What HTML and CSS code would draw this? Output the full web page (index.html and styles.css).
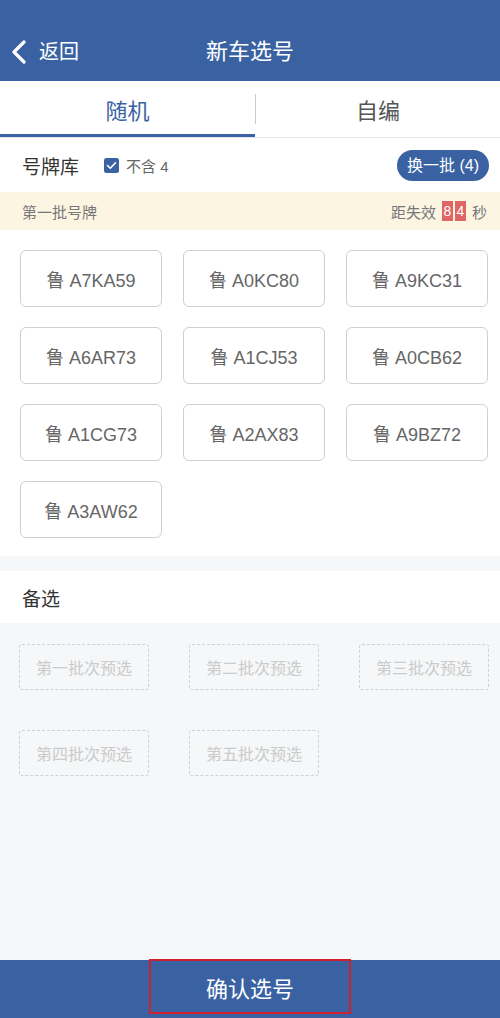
FILE: index.html
```html
<!DOCTYPE html>
<html lang="zh">
<head>
<meta charset="utf-8">
<link rel="stylesheet" href="styles.css">
</head>
<body>
<div class="page">
  <header class="topbar">
    <div class="back">
      <svg class="chev" width="16" height="24" viewBox="0 0 16 24"><path d="M13 2 L3 12 L13 22" fill="none" stroke="#fff" stroke-width="3.2" stroke-linecap="round" stroke-linejoin="round"/></svg>
      <span class="back-text">返回</span>
    </div>
    <div class="title">新车选号</div>
  </header>
  <nav class="tabs">
    <div class="tab first active">随机</div>
    <div class="tab-sep"></div>
    <div class="tab">自编</div>
  </nav>
  <section class="pool">
    <div class="pool-head">
      <span class="pool-title">号牌库</span>
      <span class="check">
        <svg width="15" height="15" viewBox="0 0 15 15"><rect x="0" y="0" width="15" height="15" rx="2.5" fill="#3a62a3"/><path d="M3.5 7.5 L6.3 10.3 L11.5 4.8" fill="none" stroke="#fff" stroke-width="1.6" stroke-linecap="round" stroke-linejoin="round"/></svg>
        <span class="check-text">不含 4</span>
      </span>
      <span class="swap">换一批 (4)</span>
    </div>
    <div class="batch">
      <span class="batch-name">第一批号牌</span>
      <span class="timer">距失效 <span class="digits"><span class="digit">8</span><span class="digit">4</span></span> 秒</span>
    </div>
    <div class="plates">
      <div class="plate">鲁 A7KA59</div>
      <div class="plate">鲁 A0KC80</div>
      <div class="plate">鲁 A9KC31</div>
      <div class="plate">鲁 A6AR73</div>
      <div class="plate">鲁 A1CJ53</div>
      <div class="plate">鲁 A0CB62</div>
      <div class="plate">鲁 A1CG73</div>
      <div class="plate">鲁 A2AX83</div>
      <div class="plate">鲁 A9BZ72</div>
      <div class="plate">鲁 A3AW62</div>
    </div>
  </section>
  <section class="alt-head">备选</section>
  <section class="alts">
    <div class="alt">第一批次预选</div>
    <div class="alt">第二批次预选</div>
    <div class="alt">第三批次预选</div>
    <div class="alt">第四批次预选</div>
    <div class="alt">第五批次预选</div>
  </section>
  <div class="spacer"></div>
  <footer class="bottombar">
    <div class="confirm">确认选号</div>
  </footer>
</div>
</body>
</html>
```
FILE: styles.css
```css
* { box-sizing: border-box; }
html, body { margin: 0; padding: 0; }
body {
  font-family: "Liberation Sans", "Noto Sans CJK SC", sans-serif;
  background: #f5f7f8;
  width: 500px;
  height: 1018px;
  overflow: hidden;
}
.page {
  display: flex;
  flex-direction: column;
  height: 1018px;
}
.topbar {
  height: 81px;
  background: #3a62a3;
  display: flex;
  align-items: center;
  padding-top: 22px;
  position: relative;
  color: #fff;
  flex-shrink: 0;
}
.back {
  display: flex;
  align-items: center;
  padding-left: 11px;
  gap: 12px;
}
.back-text { font-size: 20px; line-height: 24px; }
.title {
  position: absolute;
  left: 0; right: 0;
  bottom: 14px;
  text-align: center;
  font-size: 22px;
  line-height: 30px;
  pointer-events: none;
}
.tabs {
  height: 57px;
  background: #fff;
  display: flex;
  align-items: center;
  border-bottom: 1px solid #e6e6e6;
  flex-shrink: 0;
}
.tab {
  flex: 1;
  height: 100%;
  display: flex;
  align-items: center;
  justify-content: center;
  font-size: 22px;
  color: #555;
  border-bottom: 3px solid transparent;
  padding-top: 3px;
}
.tab.first { flex: 0 0 255px; }
.tab.active { color: #3a62a3; border-bottom-color: #3a62a3; }
.tab-sep { width: 1px; height: 30px; background: #ccc; }
.pool { background: #fff; padding-bottom: 18px; flex-shrink: 0; }
.pool-head {
  height: 54px;
  display: flex;
  align-items: center;
  padding: 0 11px 0 22px;
}
.pool-title { font-size: 19px; color: #333; }
.check {
  display: flex;
  align-items: center;
  gap: 7px;
  margin-left: 25px;
}
.check svg { display: block; }
.check-text { font-size: 15px; color: #666; }
.swap {
  margin-left: auto;
  background: #3a62a3;
  color: #fff;
  font-size: 16px;
  height: 31px;
  line-height: 31px;
  padding: 0 10px;
  border-radius: 16px;
}
.batch {
  height: 38px;
  background: #fcf5e2;
  display: flex;
  align-items: center;
  justify-content: space-between;
  padding: 0 13px 0 22px;
  font-size: 15px;
  color: #777;
}
.timer { display: flex; align-items: center; gap: 4px; }
.digits { display: flex; gap: 2px; margin: 0 2px; }
.digit {
  background: #e06565;
  color: #fff;
  width: 11px;
  height: 20px;
  line-height: 20px;
  text-align: center;
  font-size: 14px;
}
.plates {
  display: grid;
  grid-template-columns: repeat(3, 142px);
  justify-content: space-between;
  row-gap: 20px;
  padding: 20px 12px 0 20px;
}
.plate {
  height: 57px;
  border: 1.5px solid #cfcfcf;
  border-radius: 6px;
  display: flex;
  align-items: center;
  justify-content: center;
  font-size: 18px;
  color: #666;
}
.alt-head {
  margin-top: 15px;
  background: #fff;
  height: 52px;
  display: flex;
  align-items: center;
  padding-left: 22px;
  font-size: 19px;
  color: #333;
  flex-shrink: 0;
}
.alts {
  display: grid;
  grid-template-columns: repeat(3, 130px);
  justify-content: space-between;
  row-gap: 40px;
  padding: 21px 11px 20px 19px;
  flex-shrink: 0;
}
.alt {
  height: 46px;
  border: 1.5px dashed #d0d0d0;
  border-radius: 3px;
  display: flex;
  align-items: center;
  justify-content: center;
  font-size: 16px;
  color: #cbcbcb;
}
.spacer { flex: 1; }
.bottombar {
  height: 58px;
  background: #3a62a3;
  display: flex;
  justify-content: center;
  flex-shrink: 0;
}
.confirm {
  width: 202px;
  height: 55px;
  margin-top: -1px;
  border: 2px solid #d0202e;
  color: #fff;
  font-size: 22px;
  display: flex;
  align-items: center;
  justify-content: center;
}
```
